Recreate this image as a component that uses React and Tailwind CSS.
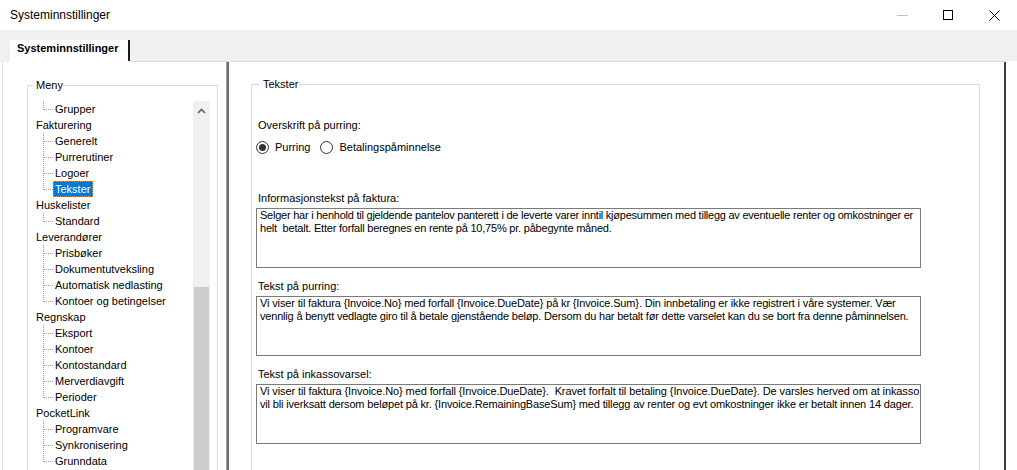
import React from 'react';

// Dotted connector drawn in front of every child node of the tree
const Connector = ({ last }) => (
  <svg width="10" height="16" className="shrink-0" aria-hidden="true">
    <line x1="0.5" y1="0" x2="0.5" y2={last ? 9 : 16} stroke="#a0a0a0" strokeDasharray="1 1" />
    <line x1="1" y1="8.5" x2="10" y2="8.5" stroke="#a0a0a0" strokeDasharray="1 1" />
  </svg>
);

const menu = [
  { child: 'Grupper', last: true },
  { top: 'Fakturering' },
  { child: 'Generelt' },
  { child: 'Purrerutiner' },
  { child: 'Logoer' },
  { child: 'Tekster', last: true, selected: true },
  { top: 'Huskelister' },
  { child: 'Standard', last: true },
  { top: 'Leverandører' },
  { child: 'Prisbøker' },
  { child: 'Dokumentutveksling' },
  { child: 'Automatisk nedlasting' },
  { child: 'Kontoer og betingelser', last: true },
  { top: 'Regnskap' },
  { child: 'Eksport' },
  { child: 'Kontoer' },
  { child: 'Kontostandard' },
  { child: 'Merverdiavgift' },
  { child: 'Perioder', last: true },
  { top: 'PocketLink' },
  { child: 'Programvare' },
  { child: 'Synkronisering' },
  { child: 'Grunndata', last: true },
];

const Radio = ({ checked }) => (
  <span className="flex h-[13px] w-[13px] shrink-0 items-center justify-center rounded-full border border-[#333333] bg-white">
    {checked && <span className="h-[7px] w-[7px] rounded-full bg-[#333333]" />}
  </span>
);

const TextBox = ({ lines }) => (
  <div className="mt-[3px] h-[60px] w-[665px] overflow-hidden border border-[#7a7a7a] bg-white pl-[3px] leading-[13px] whitespace-pre">
    {lines.map((l, i) => (
      <div key={i} className={l.cls}>
        {l.text}
      </div>
    ))}
  </div>
);

const texts = [
  {
    label: 'Informasjonstekst på faktura:',
    lines: [
      {
        text: 'Selger har i henhold til gjeldende pantelov panterett i de leverte varer inntil kjøpesummen med tillegg av eventuelle renter og omkostninger er',
        cls: 'tracking-[-0.24px]',
      },
      {
        text: 'helt  betalt. Etter forfall beregnes en rente på 10,75% pr. påbegynte måned.',
        cls: 'tracking-[-0.21px]',
      },
    ],
    mt: 'mt-[38px]',
  },
  {
    label: 'Tekst på purring:',
    lines: [
      {
        text: 'Vi viser til faktura {Invoice.No} med forfall {Invoice.DueDate} på kr {Invoice.Sum}. Din innbetaling er ikke registrert i våre systemer. Vær',
        cls: 'tracking-[-0.14px]',
      },
      {
        text: 'vennlig å benytt vedlagte giro til å betale gjenstående beløp. Dersom du har betalt før dette varselet kan du se bort fra denne påminnelsen.',
        cls: 'tracking-[-0.19px]',
      },
    ],
    mt: 'mt-[12px]',
  },
  {
    label: 'Tekst på inkassovarsel:',
    lines: [
      {
        text: 'Vi viser til faktura {Invoice.No} med forfall {Invoice.DueDate}.  Kravet forfalt til betaling {Invoice.DueDate}. De varsles herved om at inkasso',
        cls: 'tracking-[-0.1px]',
      },
      {
        text: 'vil bli iverksatt dersom beløpet på kr. {Invoice.RemainingBaseSum} med tillegg av renter og evt omkostninger ikke er betalt innen 14 dager.',
        cls: 'tracking-[-0.16px]',
      },
    ],
    mt: 'mt-[12px]',
  },
];

export default function App() {
  return (
    <div className="flex h-[470px] w-[1017px] flex-col overflow-hidden bg-white font-['Liberation_Sans',Arial,sans-serif] text-[11px] text-black">
      {/* Title bar */}
      <div className="flex h-[30px] shrink-0 items-center bg-white">
        <span className="pl-[10px] text-[12px]">Systeminnstillinger</span>
        <div className="ml-auto flex h-full">
          <div className="flex h-full w-[46px] items-center justify-center">
            <span className="h-[1px] w-[11px] bg-[#c4c4c4]" />
          </div>
          <div className="flex h-full w-[46px] items-center justify-center">
            <span className="h-[10px] w-[10px] border border-black" />
          </div>
          <div className="flex h-full w-[46px] items-center justify-center">
            <svg width="11" height="11" viewBox="0 0 11 11" aria-hidden="true">
              <path d="M0.5 0.5 L10.5 10.5 M10.5 0.5 L0.5 10.5" stroke="#000" strokeWidth="1" />
            </svg>
          </div>
        </div>
      </div>

      {/* Tab strip */}
      <div className="flex h-[31px] shrink-0 bg-[#f0f0f0] pl-[10px] pt-[10px]">
        <div className="h-[21px] w-[120px] border-r-2 border-[#1a1a1a] bg-white pl-[7px] pt-[2px] text-[11px] leading-[13px] font-bold">
          Systeminnstillinger
        </div>
      </div>
      <div className="flex h-[1px] shrink-0">
        <div className="w-[10px] bg-[#f0f0f0]" />
        <div className="w-[120px] bg-white" />
        <div className="w-[875px] bg-[#dadada]" />
        <div className="flex-1 bg-white" />
      </div>

      {/* Body */}
      <div className="flex min-h-0 flex-1">
        <div className="w-[10px] shrink-0 pl-[2px]">
          <div className="h-full w-[1px] bg-[#e2e2e2]" />
        </div>

        {/* Menu panel */}
        <div className="w-[216px] shrink-0 pl-[17px] pt-[17px]">
          <fieldset className="h-[420px] w-[191px] border border-[#dcdcdc] pt-[9px]">
            <legend className="ml-[5px] pl-[3px] pr-0 text-[11px] leading-[13px]">Meny</legend>
            <div className="flex">
              <div className="w-[165px]">
                {menu.map((m, i) =>
                  m.top ? (
                    <div key={i} className="h-[16px] pl-[8px] leading-[16px] whitespace-nowrap">
                      {m.top}
                    </div>
                  ) : (
                    <div key={i} className="flex h-[16px] items-center pl-[15px] whitespace-nowrap">
                      <Connector last={m.last} />
                      {m.selected ? (
                        <span className="h-[16px] border border-dotted border-[#ff8728] bg-[#0078d7] pl-[1px] pr-[2px] leading-[14px] text-white">
                          {m.child}
                        </span>
                      ) : (
                        <span className="px-[2px] leading-[16px]">{m.child}</span>
                      )}
                    </div>
                  )
                )}
              </div>
              {/* Vertical scrollbar */}
              <div className="flex h-[400px] w-[17px] flex-col bg-[#f0f0f0]">
                <div className="flex h-[17px] items-center justify-center pt-[3px]">
                  <svg width="9" height="6" viewBox="0 0 9 6" aria-hidden="true">
                    <path d="M1 5 L4.5 1.5 L8 5" stroke="#606060" strokeWidth="1.6" fill="none" />
                  </svg>
                </div>
                <div className="h-[169px]" />
                <div className="mx-[1px] flex-1 bg-[#cdcdcd]" />
              </div>
            </div>
          </fieldset>
        </div>

        {/* Splitter */}
        <div className="flex w-[3px] shrink-0">
          <div className="w-[1px] bg-[#a0a0a0]" />
          <div className="w-[2px] bg-[#6d6d6d]" />
        </div>

        {/* Text settings panel */}
        <div className="w-[775px] shrink-0 pl-[22px] pt-[16px]">
          <fieldset className="h-[420px] w-[729px] border border-[#dcdcdc] pl-[4px] pt-[28px]">
            <legend className="ml-[3px] pl-[4px] pr-[1px] text-[11px] leading-[13px]">Tekster</legend>
            <div className="pl-[2px] leading-[13px]">Overskrift på purring:</div>
            <div className="mt-[9px] flex h-[13px] items-center leading-[13px]">
              <Radio checked />
              <span className="ml-[6px]">Purring</span>
              <span className="ml-[10px]">
                <Radio />
              </span>
              <span className="ml-[6px]">Betalingspåminnelse</span>
            </div>
            {texts.map((t) => (
              <div key={t.label} className={t.mt}>
                <div className="pl-[2px] leading-[13px]">{t.label}</div>
                <TextBox lines={t.lines} />
              </div>
            ))}
          </fieldset>
        </div>

        <div className="w-[2px] shrink-0 bg-[#3a3a3a]" />
        <div className="flex-1 bg-white" />
      </div>
    </div>
  );
}
